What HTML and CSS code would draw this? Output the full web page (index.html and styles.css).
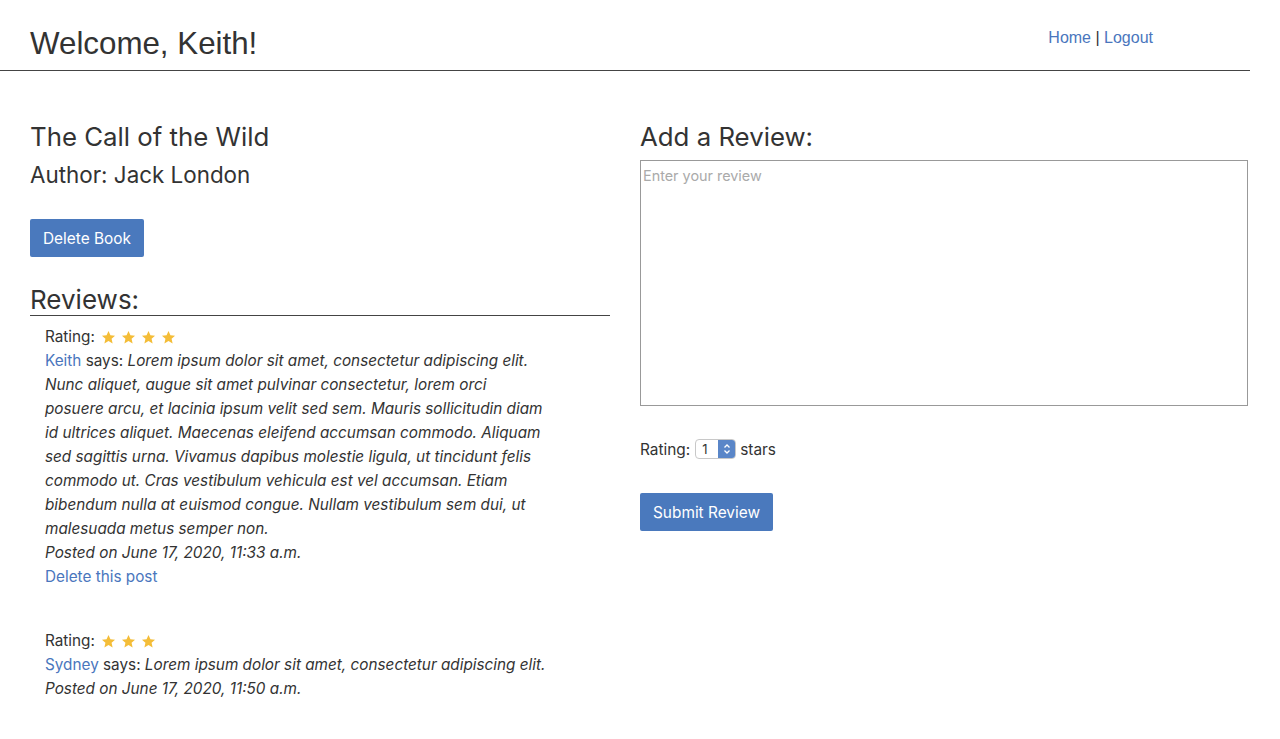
FILE: index.html
```html
<!DOCTYPE html>
<html>
<head>
<meta charset="utf-8">
<link rel="stylesheet" href="styles.css">
</head>
<body>
<header class="topbar">
  <h1 class="welcome">Welcome, Keith!</h1>
  <nav class="nav"><a href="#">Home</a> | <a href="#">Logout</a></nav>
</header>
<main class="page">
  <section class="book">
    <h2 class="title">The Call of the Wild</h2>
    <h3 class="author">Author: Jack London</h3>
    <button class="btn">Delete Book</button>
    <h2 class="reviews-head">Reviews:</h2>
    <ul class="reviews">
      <li class="review">
        <div class="rating">Rating: <span class="stars">
          <svg viewBox="0 0 24 24"><path d="M12 1.5l3.1 6.9 7.4.7-5.6 5 1.7 7.4L12 17.6l-6.6 3.9 1.7-7.4-5.6-5 7.4-.7z"/></svg>
          <svg viewBox="0 0 24 24"><path d="M12 1.5l3.1 6.9 7.4.7-5.6 5 1.7 7.4L12 17.6l-6.6 3.9 1.7-7.4-5.6-5 7.4-.7z"/></svg>
          <svg viewBox="0 0 24 24"><path d="M12 1.5l3.1 6.9 7.4.7-5.6 5 1.7 7.4L12 17.6l-6.6 3.9 1.7-7.4-5.6-5 7.4-.7z"/></svg>
          <svg viewBox="0 0 24 24"><path d="M12 1.5l3.1 6.9 7.4.7-5.6 5 1.7 7.4L12 17.6l-6.6 3.9 1.7-7.4-5.6-5 7.4-.7z"/></svg>
        </span></div>
        <p class="body"><a href="#">Keith</a> says: <em>Lorem ipsum dolor sit amet, consectetur adipiscing elit. Nunc aliquet, augue sit amet pulvinar consectetur, lorem orci posuere arcu, et lacinia ipsum velit sed sem. Mauris sollicitudin diam id ultrices aliquet. Maecenas eleifend accumsan commodo. Aliquam sed sagittis urna. Vivamus dapibus molestie ligula, ut tincidunt felis commodo ut. Cras vestibulum vehicula est vel accumsan. Etiam bibendum nulla at euismod congue. Nullam vestibulum sem dui, ut malesuada metus semper non.</em></p>
        <p class="posted"><em>Posted on June 17, 2020, 11:33 a.m.</em></p>
        <a class="del" href="#">Delete this post</a>
      </li>
      <li class="review">
        <div class="rating">Rating: <span class="stars">
          <svg viewBox="0 0 24 24"><path d="M12 1.5l3.1 6.9 7.4.7-5.6 5 1.7 7.4L12 17.6l-6.6 3.9 1.7-7.4-5.6-5 7.4-.7z"/></svg>
          <svg viewBox="0 0 24 24"><path d="M12 1.5l3.1 6.9 7.4.7-5.6 5 1.7 7.4L12 17.6l-6.6 3.9 1.7-7.4-5.6-5 7.4-.7z"/></svg>
          <svg viewBox="0 0 24 24"><path d="M12 1.5l3.1 6.9 7.4.7-5.6 5 1.7 7.4L12 17.6l-6.6 3.9 1.7-7.4-5.6-5 7.4-.7z"/></svg>
        </span></div>
        <p class="body"><a href="#">Sydney</a> says: <em>Lorem ipsum dolor sit amet, consectetur adipiscing elit.</em></p>
        <p class="posted"><em>Posted on June 17, 2020, 11:50 a.m.</em></p>
      </li>
    </ul>
  </section>
  <section class="add">
    <h2 class="title">Add a Review:</h2>
    <textarea class="text" placeholder="Enter your review"></textarea>
    <div class="rate-row">Rating: <span class="select"><span class="val">1</span><span class="spin"><svg viewBox="0 0 10 14"><path d="M2.5 5.5L5 3l2.5 2.5M2.5 8.5L5 11l2.5-2.5" fill="none" stroke="#fff" stroke-width="1.3"/></svg></span></span> stars</div>
    <button class="btn">Submit Review</button>
  </section>
</main>
</body>
</html>
```
FILE: styles.css
```css
* { box-sizing: border-box; }
body {
  margin: 0;
  font-family: Inter, "Noto Sans", sans-serif;
  color: #333;
  background: #fff;
}
a { color: #4a76bd; text-decoration: none; }
.topbar {
  width: 1250px;
  height: 71px;
  border-bottom: 1px solid #444;
  display: flex;
  justify-content: space-between;
  align-items: flex-start;
  padding: 0 97px 0 30px;
}
.welcome {
  font-family: "Liberation Sans", Arial, sans-serif;
  font-weight: 400;
  font-size: 31.3px;
  margin: 25px 0 0;
  line-height: 37px;
}
.nav {
  font-family: "Liberation Sans", Arial, sans-serif;
  font-size: 16px;
  margin-top: 29px;
  color: #333;
}
.page {
  display: grid;
  grid-template-columns: 580px 608px;
  column-gap: 30px;
  padding: 0 30px;
  margin-top: 49px;
}
.title {
  font-size: 25.8px;
  font-weight: 400;
  margin: 0;
  line-height: 34px;
}
.author {
  font-size: 22.4px;
  font-weight: 400;
  margin: 6px 0 0;
  line-height: 30px;
}
.btn {
  font-family: Inter, "Noto Sans", sans-serif;
  background: #4a79bd;
  color: #fff;
  border: none;
  border-radius: 2px;
  font-size: 15.4px;
  padding: 0 13px;
  height: 38px;
  display: block;
}
.book .btn { margin-top: 29px; }
.reviews-head {
  font-size: 26px;
  font-weight: 400;
  margin: 28px 0 0;
  line-height: 30px;
  border-bottom: 1px solid #444;
}
.reviews {
  list-style: none;
  margin: 9px 0 0;
  padding: 0 0 0 15px;
  width: 518px;
  font-size: 15.3px;
  line-height: 24px;
}
.review { margin-bottom: 40px; }
.rating { display: flex; align-items: center; }
.stars { display: inline-flex; gap: 5px; margin-left: 6px; }
.stars svg { width: 15px; height: 15px; fill: #f4bd38; }
.body, .posted { margin: 0; }
.del { display: inline-block; }
.text {
  display: block;
  width: 608px;
  height: 246px;
  margin-top: 6px;
  border: 1px solid #999;
  padding: 6px 2px;
  font-family: Inter, "Noto Sans", sans-serif;
  font-size: 14.4px;
  resize: none;
}
.text::placeholder { color: #aaa; }
.rate-row {
  margin-top: 32px;
  font-size: 15.4px;
  display: flex;
  align-items: center;
  height: 22px;
}
.select {
  display: inline-flex;
  margin: 0 4px 0 5px;
  height: 20px;
  border: 1px solid #c8c8c8;
  border-radius: 4px;
  overflow: hidden;
  width: 41px;
}
.val { flex: 1; font-size: 13px; line-height: 18px; padding-left: 6px; }
.spin {
  width: 17px;
  background: #5a86c8;
  display: flex;
  align-items: center;
  justify-content: center;
}
.spin svg { width: 10px; height: 14px; }
.add .btn { margin-top: 33px; }
```
